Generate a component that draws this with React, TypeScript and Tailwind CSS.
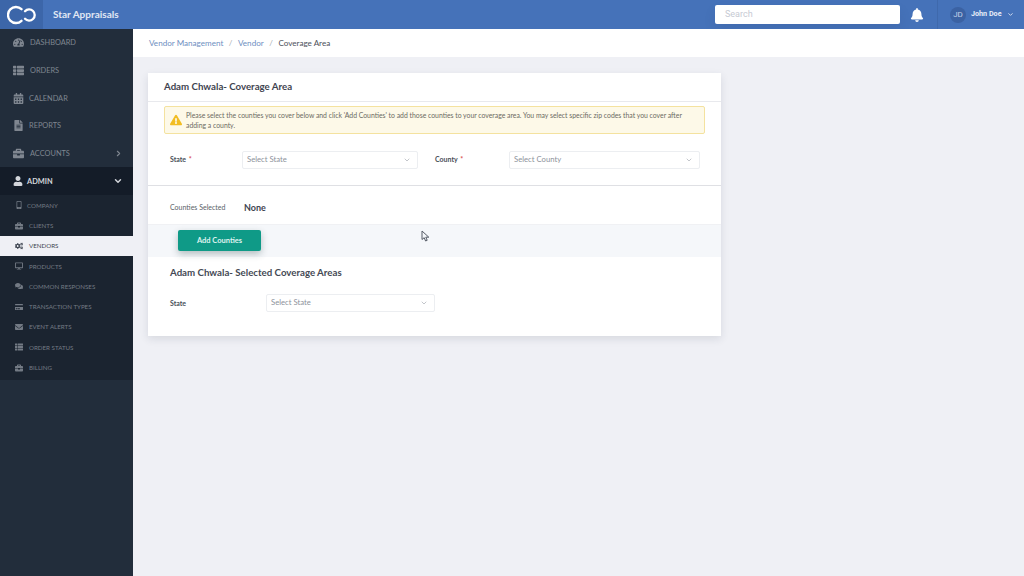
import { ChevronDown, ChevronRight } from "lucide-react";
import {
  FaBell,
  FaBriefcase,
  FaCalendarAlt,
  FaCogs,
  FaComments,
  FaCreditCard,
  FaDesktop,
  FaEnvelope,
  FaExclamationTriangle,
  FaFileAlt,
  FaMobileAlt,
  FaTachometerAlt,
  FaThList,
  FaUser,
} from "react-icons/fa";

const mainMenu = [
  { label: "DASHBOARD", icon: FaTachometerAlt, gap: "gap-[6px]" },
  { label: "ORDERS", icon: FaThList, gap: "gap-[6px]" },
  { label: "CALENDAR", icon: FaCalendarAlt, gap: "gap-[5px]" },
  { label: "REPORTS", icon: FaFileAlt, gap: "gap-[5px]" },
];

const subMenu = [
  { label: "COMPANY", icon: FaMobileAlt, gap: "gap-[4px]" },
  { label: "CLIENTS", icon: FaBriefcase, gap: "gap-[6px]" },
  { label: "VENDORS", icon: FaCogs, gap: "gap-[6px]", active: true },
  { label: "PRODUCTS", icon: FaDesktop, gap: "gap-[6px]" },
  { label: "COMMON RESPONSES", icon: FaComments, gap: "gap-[6px]" },
  { label: "TRANSACTION TYPES", icon: FaCreditCard, gap: "gap-[6px]" },
  { label: "EVENT ALERTS", icon: FaEnvelope, gap: "gap-[6px]" },
  { label: "ORDER STATUS", icon: FaThList, gap: "gap-[6px]" },
  { label: "BILLING", icon: FaBriefcase, gap: "gap-[6px]" },
];

function Select({ placeholder, className }: { placeholder: string; className: string }) {
  return (
    <div className={`flex h-[18px] items-center justify-between rounded-[2px] border border-[#eceef1] bg-white pl-1 pr-[6px] ${className}`}>
      <span className="text-[7.7px] text-[#8d929b]">{placeholder}</span>
      <ChevronDown className="h-[8px] w-[8px] text-[#a5a9b0]" />
    </div>
  );
}

export default function App() {
  return (
    <div className="flex h-[576px] w-[1024px] flex-col overflow-hidden bg-[#eff0f5] font-['Lato',sans-serif]">
      {/* Header */}
      <header className="flex h-[29px] shrink-0 items-center bg-[#4572b9]">
        <div className="flex h-full w-[43px] items-center justify-center bg-[#3c66a9]">
          <svg width="30" height="20" viewBox="0 0 30 20" fill="none" stroke="white" strokeWidth="2.3" strokeLinecap="round">
            <path d="M14.5 4.2a8 8 0 1 0 0 11.6" />
            <path d="M18 6.2a5.6 5.6 0 1 1 0 7.6" />
          </svg>
        </div>
        <span className="ml-[10px] text-[10px] font-bold text-[#e1e8f4]">Star Appraisals</span>
        <div className="ml-auto flex h-[19px] w-[185px] items-center rounded-[2px] bg-white pl-[10px] shadow-[0_6px_12px_rgba(40,60,100,0.1)]">
          <span className="font-['Roboto',sans-serif] text-[9px] text-[#c6cad3]">Search</span>
        </div>
        <div className="flex w-[37px] justify-center pr-[3px]">
          <FaBell className="h-[14px] w-[14px] text-white" />
        </div>
        <div className="flex h-full w-[87px] items-center border-l border-[#3f69ac] pl-[12px]">
          <span className="flex h-[16px] w-[16px] shrink-0 items-center justify-center rounded-full bg-[#3b62a3] font-['Roboto',sans-serif] text-[8px] text-[#c5d3e9]">JD</span>
          <span className="ml-[5px] whitespace-nowrap font-['Roboto',sans-serif] text-[7.2px] font-bold text-[#e8eef8]">John Doe</span>
          <ChevronDown className="ml-[5px] h-[7px] w-[7px] text-[#dfe7f3]" strokeWidth={3} />
        </div>
      </header>

      <div className="flex min-h-0 flex-1">
        {/* Sidebar */}
        <aside className="flex w-[133px] shrink-0 flex-col bg-[#222d3b]">
          <nav className="flex flex-col">
            {mainMenu.map((item) => (
              <div key={item.label} className={`flex h-[27.7px] items-center pl-[13px] text-[#7f8690] ${item.gap}`}>
                <item.icon className="h-[11px] w-[11px] shrink-0" />
                <span className="text-[7.4px]">{item.label}</span>
              </div>
            ))}
            <div className="flex h-[27.7px] items-center gap-[6px] pl-[13px] pr-[10px] text-[#7f8690]">
              <FaBriefcase className="h-[11px] w-[11px] shrink-0" />
              <span className="text-[7.4px]">ACCOUNTS</span>
              <ChevronRight className="ml-auto h-[9px] w-[9px]" strokeWidth={3} />
            </div>
            <div className="flex h-[27.7px] items-center gap-[4px] bg-[#141c28] pl-[13px] pr-[10px] text-[#d3d6db]">
              <FaUser className="h-[10px] w-[10px] shrink-0" />
              <span className="text-[7.4px] font-bold">ADMIN</span>
              <ChevronDown className="ml-auto h-[10px] w-[10px]" strokeWidth={3.5} />
            </div>
          </nav>
          <div className="flex flex-col bg-[#1b2430] pb-[2px]">
            {subMenu.map((item) => (
              <div
                key={item.label}
                className={`flex h-[20.3px] items-center pl-[15px] ${item.gap} ${item.active ? "bg-[#eff0f5] text-[#3d4450]" : "text-[#737a84]"}`}
              >
                <item.icon className="h-[8px] w-[8px] shrink-0" />
                <span className="whitespace-nowrap text-[6.2px]">{item.label}</span>
              </div>
            ))}
          </div>
        </aside>

        {/* Main */}
        <main className="min-w-0 flex-1">
          <div className="flex h-[28px] items-center gap-[5px] bg-white pl-[16px] text-[8.1px]">
            <span className="text-[#6f8fbf]">Vendor Management</span>
            <span className="mx-[0.5px] text-[#a9adb4]">/</span>
            <span className="text-[#6f8fbf]">Vendor</span>
            <span className="mx-[0.5px] text-[#a9adb4]">/</span>
            <span className="text-[#4c515a]">Coverage Area</span>
          </div>

          <section className="relative ml-[15px] mt-[16px] h-[263px] w-[573px] bg-white shadow-[0_3px_8px_rgba(40,50,70,0.12)]">
            <div className="flex h-[29px] items-center border-b border-[#e8e9ed] pb-[1px] pl-[16px]">
              <h1 className="text-[9.7px] font-bold text-[#3f4450]">Adam Chwala- Coverage Area</h1>
            </div>

            <div className="mx-[16px] mt-[4px] flex h-[28px] items-center rounded-[2px] border border-[#f4e29f] bg-[#fdf9e8] pl-[5px]">
              <FaExclamationTriangle className="h-[12px] w-[12px] shrink-0 text-[#f2bd22]" />
              <p className="ml-[4px] w-[510px] text-[6.85px] leading-[10px] text-[#6b6a62]">
                Please select the counties you cover below and click 'Add Counties' to add those counties to your coverage area. You may select specific zip codes that you cover after adding a county.
              </p>
            </div>

            <div className="flex h-[52px] items-center border-b border-[#dfe0e4]">
              <span className="ml-[22px] w-[72px] text-[7px] font-bold text-[#4a4f59]">
                State <span className="ml-[1px] text-[#d9534f]">*</span>
              </span>
              <Select placeholder="Select State" className="w-[176px]" />
              <span className="ml-[17px] w-[74px] text-[7px] font-bold text-[#4a4f59]">
                County <span className="ml-[1px] text-[#d9534f]">*</span>
              </span>
              <Select placeholder="Select County" className="w-[191px]" />
            </div>

            <div className="flex h-[38px] items-center pt-[5px]">
              <span className="ml-[22px] w-[74px] text-[7px] text-[#5a5f68]">Counties Selected</span>
              <span className="text-[9px] font-bold text-[#3f4450]">None</span>
            </div>

            <div className="flex h-[33px] items-center border-t border-[#f0f1f4] bg-[#f5f7fa] pb-[1px] pl-[30px]">
              <button className="h-[21px] w-[83px] rounded-[2px] bg-[#0f9a87] text-[7.5px] font-bold text-[#dff3ef] shadow-[0_3px_7px_rgba(30,60,60,0.3)]">
                Add Counties
              </button>
            </div>

            <h2 className="ml-[22px] mt-[9px] text-[9.7px] font-bold leading-[13px] text-[#444954]">Adam Chwala- Selected Coverage Areas</h2>

            <div className="mt-[15px] flex items-center">
              <span className="ml-[22px] w-[96px] text-[7px] font-bold text-[#4a4f59]">State</span>
              <Select placeholder="Select State" className="w-[169px]" />
            </div>

            {/* mouse pointer over the page */}
            <svg className="absolute left-[273px] top-[157px]" width="9" height="12" viewBox="0 0 9 12" fill="#f4f6f9" stroke="#555b66" strokeWidth="1" strokeLinejoin="round">
              <path d="M1 1v8.5l2.2-1.8L4.6 11l1.6-.7-1.4-3.1H7.8z" />
            </svg>
          </section>
        </main>
      </div>
    </div>
  );
}
